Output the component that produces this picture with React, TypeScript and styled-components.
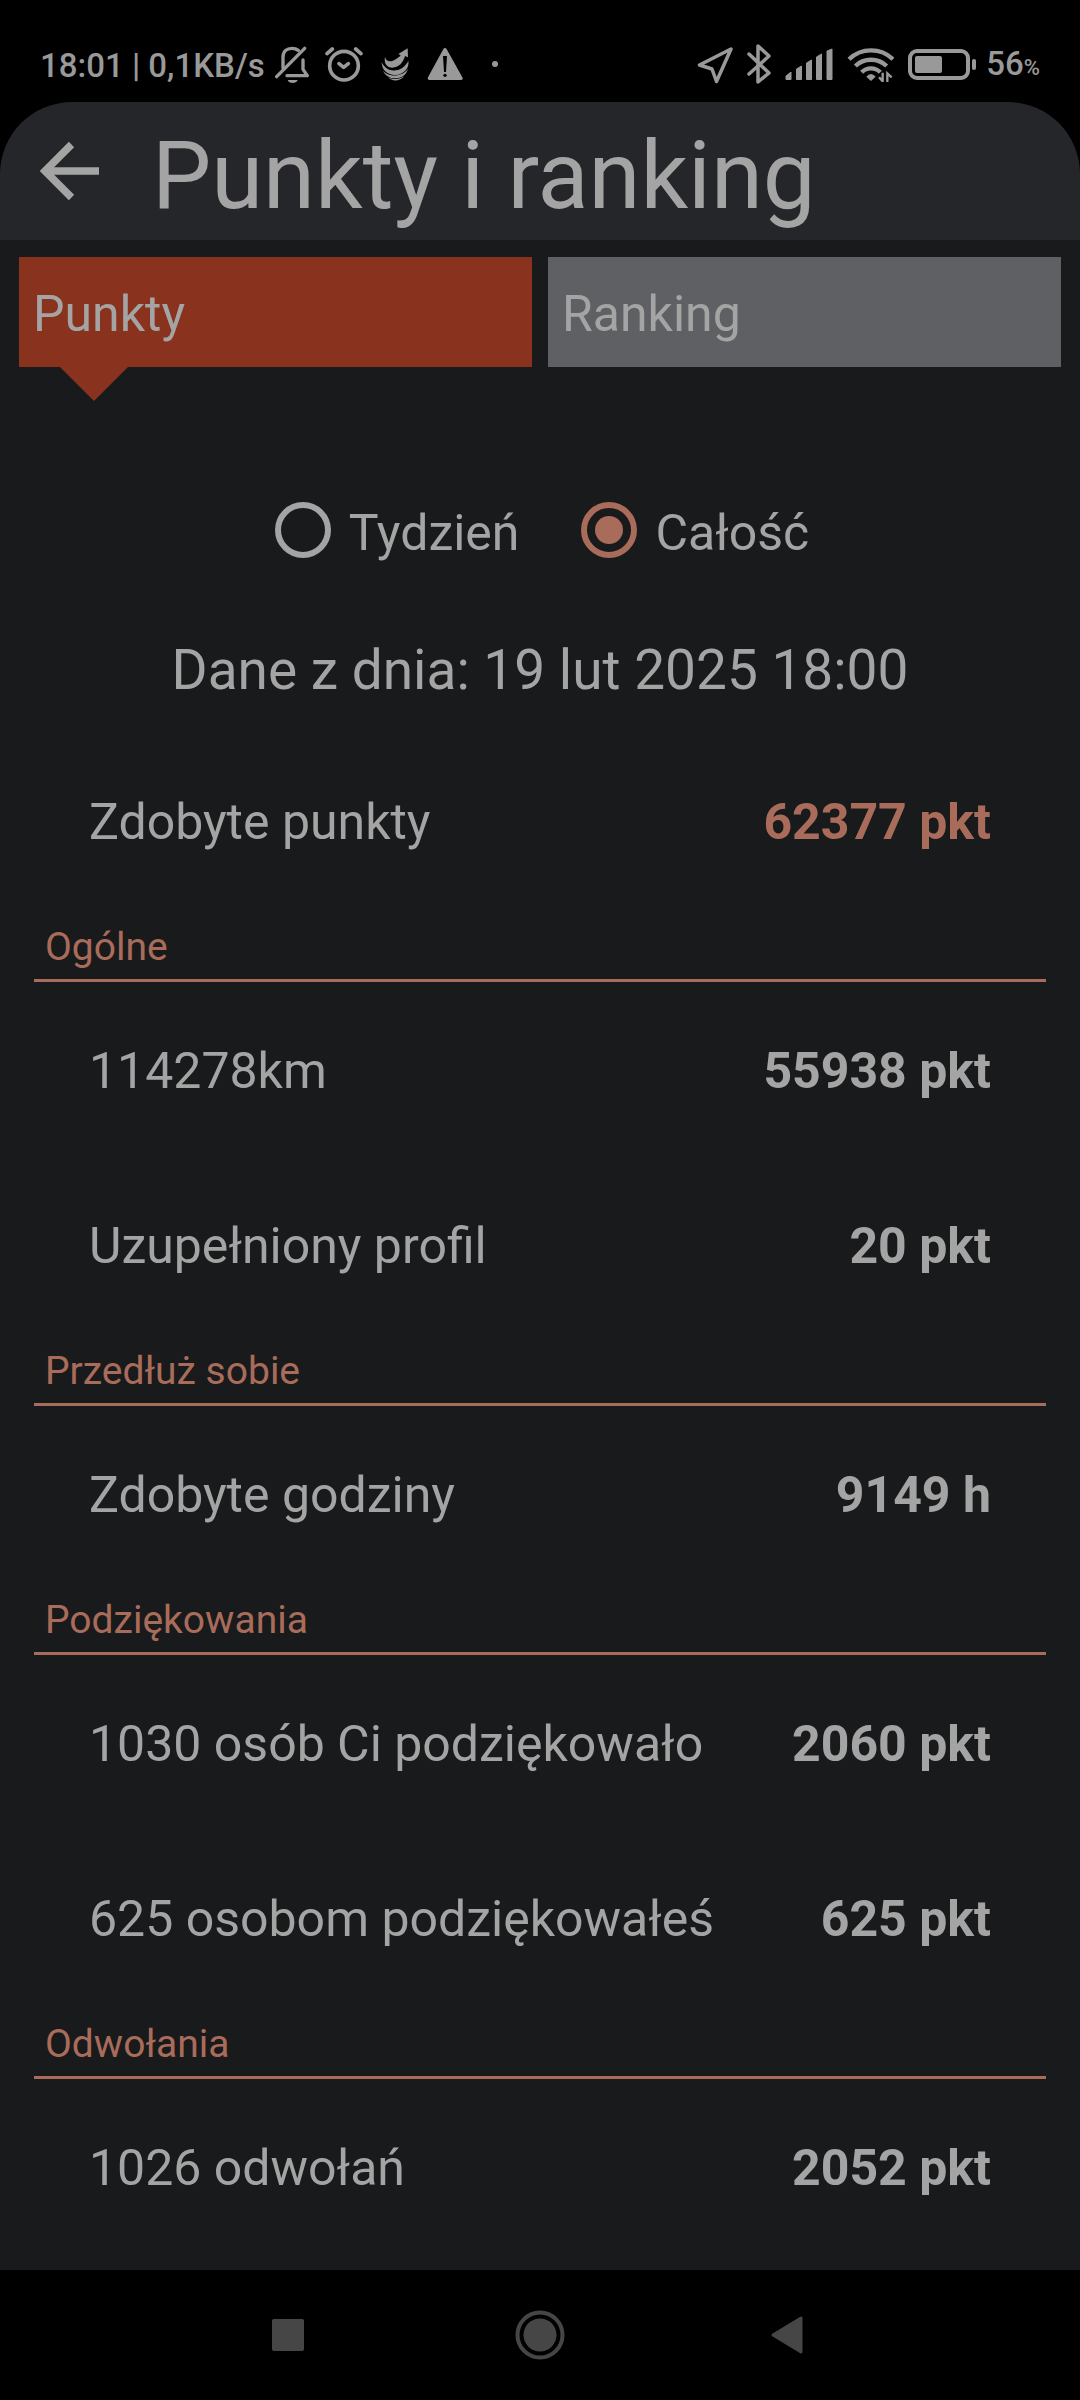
import React, { useState } from "react";
import styled, { createGlobalStyle } from "styled-components";

const color = {
  black: "#000000",
  page: "#191a1b",
  header: "#252629",
  text: "#a4a4a4",
  status: "#999999",
  accent: "#a96c5b",
  tabActive: "#89321d",
  tabIdle: "#5f6063",
  nav: "#464646",
};

const GlobalStyle = createGlobalStyle`
  *, *::before, *::after { box-sizing: border-box; }
  body {
    margin: 0;
    background: ${color.black};
    color: ${color.text};
    font-family: Roboto, "Noto Sans", sans-serif;
    font-size: 50px;
    line-height: 60px;
  }
`;

const Screen = styled.div`
  display: flex;
  flex-direction: column;
  min-height: 100vh;
`;

const StatusBar = styled.div`
  display: flex;
  align-items: center;
  justify-content: space-between;
  height: 102px;
  padding: 26px 40px 0;
  color: ${color.status};
  font-size: 33px;
  font-weight: 500;
  line-height: 40px;
`;

const StatusGroup = styled.div`
  display: flex;
  align-items: center;
  gap: 10px;
`;

const StatusIcons = styled.div`
  display: flex;
  align-items: center;
  gap: 14px;
`;

const StatusText = styled.span`
  padding-top: 4px;
  white-space: nowrap;
`;

const Percent = styled.small`
  font-size: 22px;
`;

const Header = styled.header`
  display: flex;
  align-items: center;
  gap: 46px;
  height: 138px;
  padding: 0 32px;
  background: ${color.header};
  border-radius: 72px 72px 0 0;
`;

const IconButton = styled.button`
  display: flex;
  align-items: center;
  justify-content: center;
  padding: 0;
  border: 0;
  background: none;
  color: inherit;
`;

const Title = styled.h1`
  margin: 0;
  padding-top: 10px;
  font-size: 94px;
  font-weight: 400;
  line-height: 112px;
  white-space: nowrap;
`;

const Main = styled.main`
  flex: 1;
  padding: 17px 0 0;
  background: ${color.page};
`;

const Tabs = styled.div`
  display: grid;
  grid-template-columns: 1fr 1fr;
  gap: 16px;
  padding: 0 19px;
`;

const Tab = styled.button<{ $active: boolean }>`
  position: relative;
  height: 110px;
  padding: 4px 14px 0;
  border: 0;
  background: ${(p) => (p.$active ? color.tabActive : color.tabIdle)};
  color: inherit;
  font: inherit;
  text-align: left;

  &::after {
    content: "";
    display: ${(p) => (p.$active ? "block" : "none")};
    position: absolute;
    top: 100%;
    left: 41px;
    border: solid transparent;
    border-width: 34px 34px 0;
    border-top-color: ${color.tabActive};
  }
`;

const Range = styled.div`
  display: flex;
  justify-content: center;
  gap: 62px;
  padding: 130px 0 0 4px;
`;

const RangeOption = styled.label`
  display: flex;
  align-items: center;
  gap: 18px;
`;

const Radio = styled.input`
  appearance: none;
  display: grid;
  place-items: center;
  width: 56px;
  height: 56px;
  margin: 0;
  border: 6px solid ${color.text};
  border-radius: 50%;

  &:checked {
    border-color: ${color.accent};
  }

  &:checked::before {
    content: "";
    width: 28px;
    height: 28px;
    border-radius: 50%;
    background: ${color.accent};
  }
`;

const RangeText = styled.span`
  padding-top: 6px;
`;

const DateLine = styled.p`
  margin: 0;
  padding: 72px 0 28px;
  font-size: 55px;
  line-height: 70px;
  text-align: center;
`;

const SectionTitle = styled.h2`
  height: 74px;
  margin: 0 34px;
  padding: 16px 11px 0;
  border-bottom: 3px solid ${color.accent};
  color: ${color.accent};
  font-size: 39px;
  font-weight: 400;
  line-height: 46px;
`;

const Rows = styled.dl`
  margin: 0;
`;

const Row = styled.div`
  display: flex;
  align-items: center;
  justify-content: space-between;
  height: 175px;
  padding: 2px 89px 0;
`;

const Label = styled.dt``;

const Value = styled.dd<{ $accent?: boolean }>`
  margin: 0;
  color: ${(p) => (p.$accent ? color.accent : "inherit")};
  font-weight: 700;
`;

const NavBar = styled.nav`
  display: grid;
  grid-template-columns: repeat(3, 1fr);
  height: 130px;
  padding: 0 15%;
  color: ${color.nav};
`;

type Item = { label: string; value: string; accent?: boolean };

const total: Item[] = [{ label: "Zdobyte punkty", value: "62377 pkt", accent: true }];

const sections: { title: string; items: Item[] }[] = [
  {
    title: "Ogólne",
    items: [
      { label: "114278km", value: "55938 pkt" },
      { label: "Uzupełniony profil", value: "20 pkt" },
    ],
  },
  { title: "Przedłuż sobie", items: [{ label: "Zdobyte godziny", value: "9149 h" }] },
  {
    title: "Podziękowania",
    items: [
      { label: "1030 osób Ci podziękowało", value: "2060 pkt" },
      { label: "625 osobom podziękowałeś", value: "625 pkt" },
    ],
  },
  { title: "Odwołania", items: [{ label: "1026 odwołań", value: "2052 pkt" }] },
];

function PointRows({ items }: { items: Item[] }) {
  return (
    <Rows>
      {items.map((item) => (
        <Row key={item.label}>
          <Label>{item.label}</Label>
          <Value $accent={item.accent}>{item.value}</Value>
        </Row>
      ))}
    </Rows>
  );
}

const MutedBell = () => (
  <svg width="36" height="40" viewBox="18 12 108 120" fill="none" stroke="currentColor" strokeWidth="10" strokeLinecap="round" strokeLinejoin="round">
    <path d="M42 84V52C42 34 54 25 69 25C77 25 83 27 88 31" />
    <path d="M102 60V88L115 107H54" />
    <path d="M23 110L107 25" />
    <path d="M56 120H86C83 132 59 132 56 120Z" fill="currentColor" stroke="none" />
  </svg>
);

const AlarmClock = () => (
  <svg width="38" height="40" viewBox="167 12 114 120" fill="none" stroke="currentColor" strokeWidth="11" strokeLinecap="round" strokeLinejoin="round">
    <circle cx="224" cy="77" r="43" />
    <path d="M209 71L223 82L237 71" />
    <path d="M173 41L189 27M259 27L275 41" />
  </svg>
);

const Swirl = () => (
  <svg width="36" height="36" viewBox="24 18 108 108" fill="currentColor">
    <path d="M48 50C50 64 62 66 72 62C84 57 92 50 95 46L88 42L116 25L117 52L108 48C102 70 88 82 70 83C54 83 44 70 48 50Z" />
    <path d="M38 66C46 84 62 94 80 91C98 88 112 76 118 62C122 84 104 104 78 105C56 105 38 90 38 66Z" />
    <path d="M42 92C56 110 98 114 117 86C112 106 96 115 78 115C62 115 48 106 42 92Z" />
    <path d="M56 112C70 120 92 119 106 108C94 124 70 126 56 112Z" />
  </svg>
);

const Warning = () => (
  <svg width="36" height="36" viewBox="174 18 108 108">
    <path d="M228 29L276 115H181Z" fill="currentColor" stroke="currentColor" strokeWidth="10" strokeLinejoin="round" />
    <path d="M222 48H234L231 96H225Z" fill="#000" />
    <circle cx="228" cy="106" r="5" fill="#000" />
  </svg>
);

const Dot = () => (
  <svg width="36" height="36" viewBox="0 0 36 36">
    <circle cx="18" cy="18" r="3" fill="currentColor" />
  </svg>
);

const LocationArrow = () => (
  <svg width="36" height="40" viewBox="0 0 36 40" fill="none" stroke="currentColor" strokeWidth="3.5" strokeLinejoin="round">
    <path d="M34 5L2.500 21L15 25L19.500 37.500Z" />
  </svg>
);

const Bluetooth = () => (
  <svg width="24" height="40" viewBox="0 0 24 40" fill="none" stroke="currentColor" strokeWidth="3.5" strokeLinecap="round" strokeLinejoin="round">
    <path d="M2 10L22 29L11 38V2L22 12L2 30" />
  </svg>
);

const Signal = () => (
  <svg width="48" height="32" viewBox="0 0 48 32" fill="currentColor" stroke="currentColor" strokeWidth="1" strokeLinejoin="round">
    <path d="M1 28L6 24V31.500H1ZM11.500 21L16.500 18V31.500H11.500ZM21.500 15L26.500 12V31.500H21.500ZM31.500 9L36.500 6V31.500H31.500ZM42 3L47 1V31.500H42Z" />
  </svg>
);

const Wifi = () => (
  <svg width="47" height="36" viewBox="24 18 141 108" fill="none" stroke="currentColor" strokeWidth="13">
    <path d="M30 58C66 22 126 22 162 58" />
    <path d="M49 78C74 53 118 53 143 78" />
    <path d="M68 97C83 81 109 81 124 97" />
    <path d="M82 110Q96 94 110 110L96 123Z" fill="currentColor" stroke="none" />
    <path d="M131 98V124L120 112M145 126V100L158 112" strokeWidth="7" />
  </svg>
);

const Battery = () => (
  <svg width="68" height="31" viewBox="0 0 68 31" fill="none" stroke="currentColor">
    <rect x="2" y="2" width="58" height="27" rx="7" strokeWidth="4" />
    <rect x="7" y="7" width="27" height="17" rx="2" fill="currentColor" stroke="none" />
    <path d="M66 12V19" strokeWidth="4" strokeLinecap="round" />
  </svg>
);

const BackArrow = () => (
  <svg width="74" height="74" viewBox="0 0 74 74" fill="none" stroke="currentColor" strokeWidth="7.5">
    <path d="M67 37H13M39.500 10.500L13 37L39.500 63.500" />
  </svg>
);

const RecentIcon = () => (
  <svg width="50" height="50" viewBox="0 0 50 50">
    <rect x="9" y="9" width="32" height="32" rx="2" fill="currentColor" />
  </svg>
);

const HomeIcon = () => (
  <svg width="50" height="50" viewBox="0 0 50 50">
    <circle cx="25" cy="25" r="22.5" fill="none" stroke="currentColor" strokeWidth="4" />
    <circle cx="25" cy="25" r="16.5" fill="currentColor" />
  </svg>
);

const PreviousIcon = () => (
  <svg width="50" height="50" viewBox="0 0 50 50">
    <path d="M6 25L34 8V42Z" fill="currentColor" stroke="currentColor" strokeWidth="3" strokeLinejoin="round" />
  </svg>
);

export default function App() {
  const [tab, setTab] = useState("Punkty");
  const [range, setRange] = useState("Całość");

  return (
    <Screen>
      <GlobalStyle />
      <StatusBar>
        <StatusGroup>
          <StatusText>18:01 | 0,1KB/s</StatusText>
          <StatusIcons>
            <MutedBell />
            <AlarmClock />
            <Swirl />
            <Warning />
            <Dot />
          </StatusIcons>
        </StatusGroup>
        <StatusGroup>
          <StatusIcons>
            <LocationArrow />
            <Bluetooth />
            <Signal />
            <Wifi />
            <Battery />
          </StatusIcons>
          <StatusText>
            56<Percent>%</Percent>
          </StatusText>
        </StatusGroup>
      </StatusBar>

      <Header>
        <IconButton aria-label="Wstecz">
          <BackArrow />
        </IconButton>
        <Title>Punkty i ranking</Title>
      </Header>

      <Main>
        <Tabs role="tablist">
          {["Punkty", "Ranking"].map((name) => (
            <Tab key={name} role="tab" aria-selected={tab === name} $active={tab === name} onClick={() => setTab(name)}>
              {name}
            </Tab>
          ))}
        </Tabs>

        <Range role="radiogroup" aria-label="Zakres">
          {["Tydzień", "Całość"].map((name) => (
            <RangeOption key={name}>
              <Radio type="radio" name="range" checked={range === name} onChange={() => setRange(name)} />
              <RangeText>{name}</RangeText>
            </RangeOption>
          ))}
        </Range>

        <DateLine>Dane z dnia: 19 lut 2025 18:00</DateLine>

        <PointRows items={total} />
        {sections.map((section) => (
          <section key={section.title}>
            <SectionTitle>{section.title}</SectionTitle>
            <PointRows items={section.items} />
          </section>
        ))}
      </Main>

      <NavBar aria-label="System">
        <IconButton aria-label="Ostatnie">
          <RecentIcon />
        </IconButton>
        <IconButton aria-label="Ekran główny">
          <HomeIcon />
        </IconButton>
        <IconButton aria-label="Poprzedni">
          <PreviousIcon />
        </IconButton>
      </NavBar>
    </Screen>
  );
}
